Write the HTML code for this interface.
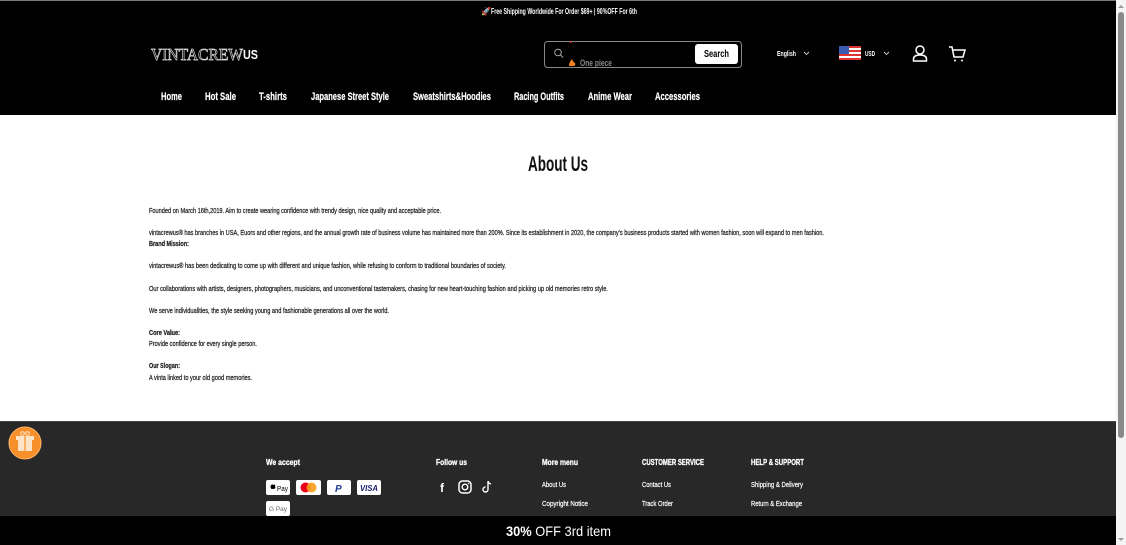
<!DOCTYPE html>
<html><head><meta charset="utf-8"><style>
html,body{margin:0;padding:0;width:1126px;height:545px;overflow:hidden;background:#fff}
svg{display:block}
text{font-family:"Liberation Sans Narrow","Liberation Sans",sans-serif}
</style></head><body>
<svg width="1126" height="545" viewBox="0 0 1126 545" xmlns="http://www.w3.org/2000/svg">
<rect x="0" y="0" width="1116" height="115" fill="#000"/>
<rect x="0" y="0" width="1116" height="1" fill="#777"/>
<text x="481" y="14" font-size="8" fill="#ff5a7a">🚀</text>
<text x="491" y="14" font-size="8" font-weight="bold" fill="#fff" textLength="146" lengthAdjust="spacingAndGlyphs">Free Shipping Worldwide For Order $69+ | 90%OFF For 6th</text>
<text x="151" y="60" style="font-family:'Liberation Serif',serif" font-size="17" fill="#000" stroke="#ddd" stroke-width="0.7" textLength="92" lengthAdjust="spacingAndGlyphs">VINTACREW</text>
<text x="243" y="59" font-size="13" font-weight="bold" fill="#fff" textLength="15" lengthAdjust="spacingAndGlyphs">US</text>
<rect x="544.5" y="41.5" width="197" height="26" rx="3" fill="#000" stroke="#888"/>
<circle cx="558" cy="52.5" r="3.3" fill="none" stroke="#aaa" stroke-width="1"/>
<line x1="560.5" y1="55" x2="563" y2="57.5" stroke="#aaa"/>
<rect x="570" y="41" width="1.5" height="2" fill="#e33"/>
<path d="M569 66 q0-4 3-7 q1 3 3 4 q1 2 -1 3z" fill="#f08020"/>
<text x="580" y="66" font-size="9" font-weight="bold" fill="#888" textLength="32" lengthAdjust="spacingAndGlyphs">One piece</text>
<rect x="695" y="44" width="43" height="20" rx="3" fill="#fff"/>
<text x="704" y="57" font-size="10" font-weight="bold" fill="#000" textLength="25" lengthAdjust="spacingAndGlyphs">Search</text>
<text x="777" y="56" font-size="7" font-weight="bold" fill="#fff" textLength="19" lengthAdjust="spacingAndGlyphs">English</text>
<path d="M804 52 l2.5 2.5 l2.5 -2.5" fill="none" stroke="#ccc" stroke-width="0.9"/>
<rect x="839" y="46" width="22" height="14" fill="#fff"/>
<g fill="#d33"><rect x="839" y="46" width="22" height="2"/><rect x="839" y="50" width="22" height="2"/><rect x="839" y="54" width="22" height="2"/><rect x="839" y="58" width="22" height="2"/></g>
<rect x="839" y="46" width="10" height="8" fill="#3b5bb0"/>
<text x="865" y="56" font-size="7" font-weight="bold" fill="#fff" textLength="10" lengthAdjust="spacingAndGlyphs">USD</text>
<path d="M884 52 l2.5 2.5 l2.5 -2.5" fill="none" stroke="#ccc" stroke-width="0.9"/>
<circle cx="920" cy="50" r="4" fill="none" stroke="#fff" stroke-width="1.5"/>
<path d="M913.5 61 v-2 q0-4 6.5-4 q6.5 0 6.5 4 v2 z" fill="none" stroke="#fff" stroke-width="1.5"/>
<path d="M949 47 h3 l2 10 h9 l2 -7 h-12" fill="none" stroke="#fff" stroke-width="1.5"/>
<circle cx="955" cy="60.5" r="1" fill="#fff"/><circle cx="962" cy="60.5" r="1" fill="#fff"/>
<g font-size="11" font-weight="bold" fill="#fff" stroke="#fff" stroke-width="0.2">
<text x="161" y="100" textLength="21" lengthAdjust="spacingAndGlyphs">Home</text>
<text x="205" y="100" textLength="31" lengthAdjust="spacingAndGlyphs">Hot Sale</text>
<text x="259" y="100" textLength="28" lengthAdjust="spacingAndGlyphs">T-shirts</text>
<text x="311" y="100" textLength="78" lengthAdjust="spacingAndGlyphs">Japanese Street Style</text>
<text x="413" y="100" textLength="78" lengthAdjust="spacingAndGlyphs">Sweatshirts&amp;Hoodies</text>
<text x="514" y="100" textLength="50" lengthAdjust="spacingAndGlyphs">Racing Outfits</text>
<text x="588" y="100" textLength="44" lengthAdjust="spacingAndGlyphs">Anime Wear</text>
<text x="655" y="100" textLength="45" lengthAdjust="spacingAndGlyphs">Accessories</text>
</g>
<text x="528" y="171" font-size="21" font-weight="bold" fill="#111" textLength="60" lengthAdjust="spacingAndGlyphs">About Us</text>
<g font-size="7.5" fill="#222" stroke="#222" stroke-width="0.25">
<text x="149" y="213" textLength="292" lengthAdjust="spacingAndGlyphs">Founded on March 16th,2019. Aim to create wearing confidence with trendy design, nice quality and acceptable price.</text>
<text x="149" y="235" textLength="675" lengthAdjust="spacingAndGlyphs">vintacrewus® has branches in USA, Euors and other regions, and the annual growth rate of business volume has maintained more than 200%. Since its establishment in 2020, the company's business products started with women fashion, soon will expand to men fashion.</text>
<text x="149" y="246" font-weight="bold" textLength="40" lengthAdjust="spacingAndGlyphs">Brand Mission:</text>
<text x="149" y="268" textLength="357" lengthAdjust="spacingAndGlyphs">vintacrewus® has been dedicating to come up with different and unique fashion, while refusing to conform to traditional boundaries of society.</text>
<text x="149" y="291" textLength="459" lengthAdjust="spacingAndGlyphs">Our collaborations with artists, designers, photographers, musicians, and unconventional tastemakers, chasing for new heart-touching fashion and picking up old memories retro style.</text>
<text x="149" y="313" textLength="240" lengthAdjust="spacingAndGlyphs">We serve individualities, the style seeking young and fashionable generations all over the world.</text>
<text x="149" y="335" font-weight="bold" textLength="31" lengthAdjust="spacingAndGlyphs">Core Value:</text>
<text x="149" y="346" textLength="108" lengthAdjust="spacingAndGlyphs">Provide confidence for every single person.</text>
<text x="149" y="368" font-weight="bold" textLength="31" lengthAdjust="spacingAndGlyphs">Our Slogan:</text>
<text x="149" y="380" textLength="103" lengthAdjust="spacingAndGlyphs">A vinta linked to your old good memories.</text>
</g>
<rect x="0" y="421" width="1116" height="95" fill="#282828"/>
<rect x="0" y="421" width="1116" height="1" fill="#444"/>
<circle cx="25" cy="443" r="16" fill="#f7902a"/>
<circle cx="25" cy="443" r="16" fill="none" stroke="#fbb36a" stroke-width="1"/>
<rect x="18" y="440" width="14" height="11" fill="#fde3c8"/>
<rect x="16" y="436" width="18" height="4" fill="#fde3c8"/>
<line x1="25" y1="436" x2="25" y2="451" stroke="#f7902a" stroke-width="1.2"/>
<circle cx="22.5" cy="433.5" r="1.8" fill="none" stroke="#fde3c8"/><circle cx="27.5" cy="433.5" r="1.8" fill="none" stroke="#fde3c8"/>
<g font-size="8.5" font-weight="bold" fill="#fff" stroke="#fff" stroke-width="0.3">
<text x="266" y="465" textLength="34" lengthAdjust="spacingAndGlyphs">We accept</text>
<text x="436" y="465" textLength="31" lengthAdjust="spacingAndGlyphs">Follow us</text>
<text x="542" y="465" textLength="36" lengthAdjust="spacingAndGlyphs">More menu</text>
<text x="642" y="465" textLength="62" lengthAdjust="spacingAndGlyphs">CUSTOMER SERVICE</text>
<text x="751" y="465" textLength="53" lengthAdjust="spacingAndGlyphs">HELP &amp; SUPPORT</text>
</g>
<g font-size="7.5" fill="#fff" stroke="#fff" stroke-width="0.2">
<text x="542" y="487" textLength="24" lengthAdjust="spacingAndGlyphs">About Us</text>
<text x="542" y="506" textLength="46" lengthAdjust="spacingAndGlyphs">Copyright Notice</text>
<text x="642" y="487" textLength="29" lengthAdjust="spacingAndGlyphs">Contact Us</text>
<text x="642" y="506" textLength="31" lengthAdjust="spacingAndGlyphs">Track Order</text>
<text x="751" y="487" textLength="52" lengthAdjust="spacingAndGlyphs">Shipping &amp; Delivery</text>
<text x="751" y="506" textLength="51" lengthAdjust="spacingAndGlyphs">Return &amp; Exchange</text>
</g>
<rect x="266" y="480" width="24" height="15" rx="2" fill="#fff"/>
<path d="M271 485 q1.5-1 2.5 0 q1-1 2 0 q-1 1 0 2.5 q-1 2 -2 1.5 q-0.5-0.5 -1 0 q-1.5 0.5 -2-2 q0-1.5 0.5-2z" fill="#000"/>
<text x="277" y="491" font-size="7" fill="#000" textLength="11" lengthAdjust="spacingAndGlyphs">Pay</text>
<rect x="296" y="480" width="25" height="15" rx="2" fill="#fff"/>
<circle cx="305.5" cy="487.5" r="5" fill="#eb001b"/><circle cx="311.5" cy="487.5" r="5" fill="#f79e1b" fill-opacity="0.9"/>
<rect x="327" y="480" width="24" height="15" rx="2" fill="#fff"/>
<text x="335" y="492" font-size="10" font-weight="bold" font-style="italic" fill="#1a3d8f">P</text>
<rect x="357" y="480" width="24" height="15" rx="2" fill="#fff"/>
<text x="360" y="491" font-size="8" font-weight="bold" font-style="italic" fill="#1a1f71" textLength="18" lengthAdjust="spacingAndGlyphs">VISA</text>
<rect x="266" y="501" width="24" height="15" rx="2" fill="#fff"/>
<text x="269" y="511" font-size="6" fill="#666" textLength="18" lengthAdjust="spacingAndGlyphs">G Pay</text>
<text x="440" y="492" font-size="12" font-weight="bold" fill="#fff">f</text>
<rect x="459" y="481" width="12" height="12" rx="3.5" fill="none" stroke="#fff" stroke-width="1.5"/>
<circle cx="465" cy="487" r="2.8" fill="none" stroke="#fff" stroke-width="1.4"/>
<circle cx="468.6" cy="483.5" r="0.7" fill="#fff"/>
<path d="M488 481 v8.5 a2.5 2.5 0 1 1 -2.5 -2.5 M488 481 q0.5 2.5 3 3" fill="none" stroke="#fff" stroke-width="1.4"/>
<rect x="0" y="516" width="1116" height="29" fill="#000"/>
<text x="506" y="536" style="font-family:'Liberation Sans',sans-serif" font-size="14" fill="#fff" textLength="105" lengthAdjust="spacingAndGlyphs"><tspan font-weight="bold">30%</tspan> OFF 3rd item</text>
<rect x="1116" y="0" width="10" height="545" fill="#f4f4f4"/>
<rect x="1118" y="12" width="6" height="426" rx="3" fill="#8a8a8a"/>
<path d="M1118 8 l3 -3 l3 3z" fill="#999"/>
<path d="M1118 538 l3 3 l3 -3z" fill="#999"/>
</svg>
</body></html>
